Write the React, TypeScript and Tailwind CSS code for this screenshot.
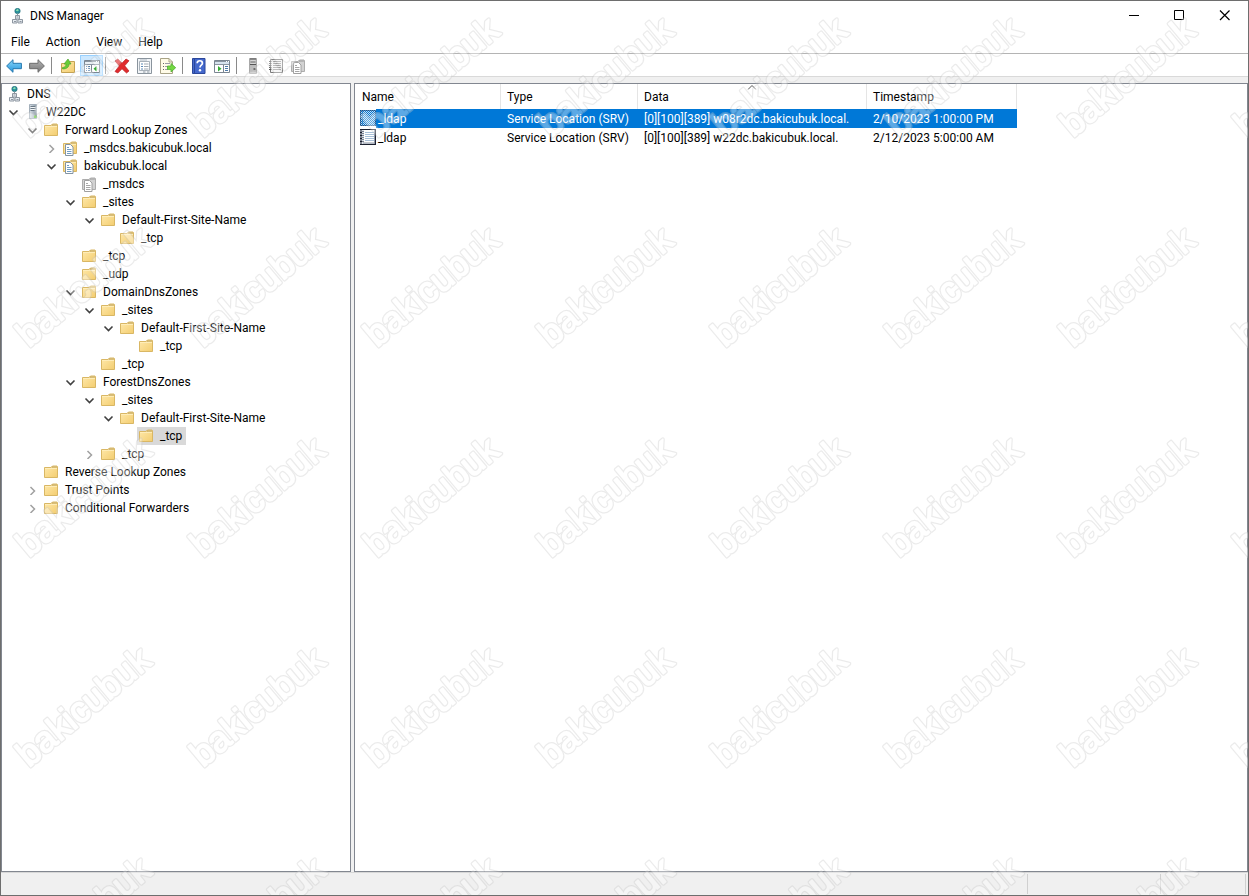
import type { ReactNode } from 'react';

type IconName =
	| 'dns'
	| 'server'
	| 'folder'
	| 'zone'
	| 'zoneGray'
	| 'back'
	| 'forward'
	| 'up'
	| 'treePane'
	| 'delete'
	| 'properties'
	| 'export'
	| 'help'
	| 'actionPane'
	| 'serverGray'
	| 'list'
	| 'record'
	| 'recordSelected';

type TreeNode = {
	label: string;
	icon: IconName;
	expanded?: boolean;
	selected?: boolean;
	children?: TreeNode[];
};

const Icon = ({ name }: { name: IconName }) => (
	<svg width="16" height="16" viewBox="0 0 16 16" className="block shrink-0" aria-hidden="true">
		{icons[name]}
	</svg>
);

const folderShape = (
	<>
		<path d="M.5 3.5h6.500l1.500-1.500h4.500l.5 1v10.500h-13z" fill="url(#folderFill)" stroke="#d9b764" />
		<path d="M8 2.500h4.500v1h-4.500z" fill="#fff8dc" stroke="#c9a95a" strokeWidth=".7" />
		<path d="M1 4.500h12" stroke="#fff0c0" strokeWidth=".8" />
	</>
);

const grayFolderShape = (
	<>
		<path d="M.5 3.5h6.500l1.500-1.500h4.500l.5 1v10.500h-13z" fill="#d2d2d2" stroke="#adadad" />
		<path d="M8 2.500h4.500v1h-4.500z" fill="#f5f5f5" stroke="#a0a0a0" strokeWidth=".7" />
	</>
);

const icons: Record<IconName, ReactNode> = {
	dns: (
		<>
			<circle cx="8.5" cy="3" r="2.7" fill="#2b929c" stroke="#1d6874" strokeWidth=".6" />
			<path d="M6.700 2.5 8.500 1l1.500 1.200-1.700 1z" fill="#8be0b0" />
			<path d="M8.500 5.500v1.500" stroke="#8c949d" />
			<path d="M6.500 7.500h4v3.500h-4zM3.500 11.500h4.500v3.500h-4.500zM9 11.500h4.500v3.500h-4.500z" fill="#e7ecf1" stroke="#8e97a1" />
			<path d="M7.500 9h2M5 13.500h2M10.500 13.500h2" stroke="#8e97a1" />
		</>
	),
	server: (
		<>
			<path d="M4.5.5h7v14h-7z" fill="url(#serverFill)" stroke="#a3afba" />
			<path d="M5.5 2.5h5M5.5 4.5h5M5.5 6.5h5" stroke="#6b7985" />
			<path d="M5.5 3.5h5M5.5 5.5h5" stroke="#f3f6f8" />
			<path d="M9 11.500h2.500v2.500H9z" fill="#62c43a" />
		</>
	),
	folder: folderShape,
	zone: (
		<>
			{folderShape}
			<path d="M2.500 4.500h5l2.500 2.500v8.500h-7.500z" fill="#fff" stroke="#8494a2" />
			<path d="M4 7.500h2M4 9.500h4.500M4 11.500h4.500M4 13.500h4.500" stroke="#6f9cc4" />
		</>
	),
	zoneGray: (
		<>
			{grayFolderShape}
			<path d="M2.500 4.500h5l2.500 2.500v8.500h-7.500z" fill="#fff" stroke="#a0a0a0" />
			<path d="M4 7.500h2M4 9.500h4.500M4 11.500h4.500M4 13.500h4.500" stroke="#a6a6a6" />
		</>
	),
	back: (
		<path d="M.6 8 7 1.7v3.600h8.400v5.400H7v3.600z" fill="url(#backFill)" stroke="#2678ae" strokeLinejoin="round" />
	),
	forward: (
		<path d="M15.4 8 9 1.7v3.600H.6v5.400H9v3.600z" fill="url(#forwardFill)" stroke="#6c6c6c" strokeLinejoin="round" />
	),
	up: (
		<>
			<path d="M1.500 5.500h7l1.500-2h4.500v11h-13z" fill="url(#folderFill)" stroke="#c4a354" />
			<path
				d="M2.500 9.500C5 9.500 6 8 6 6H4l4-5 3 5H9c0 3-2 5-6.500 5z"
				fill="#67cc36"
				stroke="#4fa52f"
				strokeWidth=".7"
			/>
		</>
	),
	treePane: (
		<>
			<path d="M.5 2.500h15v12H.5z" fill="#fff" stroke="#7a8591" />
			<path d="M1 3.500h14M1 6.500h14" stroke="#8a95a1" />
			<path d="M1 5h14" stroke="#e9eff4" strokeWidth="2" />
			<path d="M12 3.500h1M14 3.500h1" stroke="#fff" />
			<path d="M7.500 7v7.500" stroke="#7a8591" />
			<path d="M2 8.500h1M4 8.500h2M2 10.500h1M4 10.500h2M2 12.500h1M4 12.500h2" stroke="#4c79a8" />
			<path d="M12.500 8v5.500L9.500 10.700z" fill="#37ad35" />
		</>
	),
	delete: (
		<path
			d="m1 3 2.800-2L8 5.200 12 1l3 1.800L10.700 7.800 15 13l-2.500 2L8 10.800 3.800 15 1 13.500l4.300-5.600z"
			fill="#e02a2c"
			stroke="#b92125"
			strokeWidth=".7"
		/>
	),
	properties: (
		<>
			<path d="M.5.5h14v15H.5z" fill="#f1f4f7" stroke="#8a949d" />
			<path d="M2.500 3.500h10v9h-10z" fill="#fff" stroke="#a9b2ba" />
			<path d="M3 2h7" stroke="#b3bcc5" />
			<path d="M4 6h2M4 8.500h2M4 11h2" stroke="#5b88b5" />
			<path d="M7 6h4.500M7 8.500h4.500M7 11h4.500" stroke="#a0a9b2" />
			<path d="M6 14h2.500M10 14h2.500" stroke="#8c969f" />
		</>
	),
	export: (
		<>
			<path d="M.5.5h8.500l3.500 3.500v11.500H.5z" fill="#fffbe7" stroke="#a9a386" />
			<path d="M9 .5V4h3.500" fill="none" stroke="#a9a386" />
			<path d="M3 5.500h1M3 8.500h1M3 11.500h1" stroke="#666" />
			<path d="M5 5.500h5M5 8.500h3M5 11.500h3" stroke="#9a9aa6" />
			<path d="M7.500 8h3.500V5.500l4.700 4.200L11 14v-2.600H7.500z" fill="#74d842" stroke="#4fae30" strokeWidth=".8" />
		</>
	),
	help: (
		<>
			<path d="M1.500.5h12.500v15H1.500z" fill="#4468cc" stroke="#2b479a" />
			<path d="M3.500 1v14" stroke="#2b479a" />
			<path d="M6.200 5.200c0-3.300 5.200-3.300 5.200 0 0 2-2.400 2.100-2.400 4.300" fill="none" stroke="#fff" strokeWidth="1.700" />
			<circle cx="9" cy="12.300" r="1.200" fill="#fff" />
		</>
	),
	actionPane: (
		<>
			<path d="M.5 2.500h15v12H.5z" fill="#fff" stroke="#7a8591" />
			<path d="M1 3.500h14M1 6.500h14" stroke="#8a95a1" />
			<path d="M1 5h14" stroke="#d7e3ee" strokeWidth="2" />
			<path d="M12 3.500h1M14 3.500h1" stroke="#fff" />
			<path d="M9.500 7v7.500" stroke="#7a8591" />
			<path d="M11 8.500h3M11 10.500h3M11 12.500h3" stroke="#4c79a8" />
			<path d="M4 8v5.500l3.500-2.800z" fill="#37ad35" />
		</>
	),
	serverGray: (
		<>
			<path d="M4.500.5h7v15h-7z" fill="#bcbcbc" stroke="#a8a8a8" />
			<path d="M5 1h6M5 6.500h6" stroke="#555" />
			<path d="M5.500 3h5M5.500 5h5" stroke="#efefef" />
			<path d="M5.500 4h5" stroke="#666" />
			<path d="M8.500 10h2v2h-2z" fill="#6d6d6d" />
		</>
	),
	list: (
		<>
			<path d="M2.500 1.500h12v13H2.500z" fill="#f4f4f4" stroke="#7a7a7a" />
			<path d="M5 3.500h8M5 5.500h8M5 7.500h8M5 9.500h8M5 11.500h8" stroke="#979797" />
			<path d="M1 3.500h2.500M1 5.500h2.500M1 7.500h2.500M1 9.500h2.500M1 11.500h2.500" stroke="#5c5c5c" />
		</>
	),
	record: (
		<>
			<path d="M0 0h16v16H0z" fill="#dfe3ea" />
			<path d="M4 1h10v13H4z" fill="#fff" />
			<path d="M5 3.500h9M5 5.500h9M5 7.500h9M5 9.500h9M5 11.500h9" stroke="#a9c0d8" />
			<path d="M2 2.500h2M2 4.500h2M2 6.500h2M2 8.500h2M2 10.500h2M2 12.500h2" stroke="#7b8391" />
			<path d="M3 14h11" stroke="#8b93a0" />
			<path d="M1 0v16" stroke="#1c2130" strokeWidth="2" strokeDasharray="1 .5" />
			<path d="M0 .5h16M0 15.500h16M15.500 0v16" stroke="#1c2130" />
			<path d="M14.500 1v14" stroke="#8e97a8" />
		</>
	),
	recordSelected: (
		<>
			<path d="M0 0h16v16H0z" fill="#c9def0" />
			<path d="M0 0h16v16H0z" fill="url(#dither)" />
			<path d="M.5.5h15v15H.5z" fill="none" stroke="#0b2f5c" strokeDasharray="1 1" />
			<path d="M2 1v14" stroke="#175794" strokeDasharray="1 1" />
		</>
	),
};

const tree: TreeNode = {
	label: 'W22DC',
	icon: 'server',
	expanded: true,
	children: [
		{
			label: 'Forward Lookup Zones',
			icon: 'folder',
			expanded: true,
			children: [
				{ label: '_msdcs.bakicubuk.local', icon: 'zone', expanded: false },
				{
					label: 'bakicubuk.local',
					icon: 'zone',
					expanded: true,
					children: [
						{ label: '_msdcs', icon: 'zoneGray' },
						{
							label: '_sites',
							icon: 'folder',
							expanded: true,
							children: [
								{
									label: 'Default-First-Site-Name',
									icon: 'folder',
									expanded: true,
									children: [{ label: '_tcp', icon: 'folder' }],
								},
							],
						},
						{ label: '_tcp', icon: 'folder' },
						{ label: '_udp', icon: 'folder' },
						{
							label: 'DomainDnsZones',
							icon: 'folder',
							expanded: true,
							children: [
								{
									label: '_sites',
									icon: 'folder',
									expanded: true,
									children: [
										{
											label: 'Default-First-Site-Name',
											icon: 'folder',
											expanded: true,
											children: [{ label: '_tcp', icon: 'folder' }],
										},
									],
								},
								{ label: '_tcp', icon: 'folder' },
							],
						},
						{
							label: 'ForestDnsZones',
							icon: 'folder',
							expanded: true,
							children: [
								{
									label: '_sites',
									icon: 'folder',
									expanded: true,
									children: [
										{
											label: 'Default-First-Site-Name',
											icon: 'folder',
											expanded: true,
											children: [{ label: '_tcp', icon: 'folder', selected: true }],
										},
									],
								},
								{ label: '_tcp', icon: 'folder', expanded: false },
							],
						},
					],
				},
			],
		},
		{ label: 'Reverse Lookup Zones', icon: 'folder' },
		{ label: 'Trust Points', icon: 'folder', expanded: false },
		{ label: 'Conditional Forwarders', icon: 'folder', expanded: false },
	],
};

const toolbar: { title: string; icon: IconName; active?: boolean }[][] = [
	[
		{ title: 'Back', icon: 'back' },
		{ title: 'Forward', icon: 'forward' },
	],
	[
		{ title: 'Up One Level', icon: 'up' },
		{ title: 'Show/Hide Console Tree', icon: 'treePane', active: true },
	],
	[
		{ title: 'Delete', icon: 'delete' },
		{ title: 'Properties', icon: 'properties' },
		{ title: 'Export List', icon: 'export' },
	],
	[
		{ title: 'Help', icon: 'help' },
		{ title: 'Show/Hide Action Pane', icon: 'actionPane' },
	],
	[
		{ title: 'New Server', icon: 'serverGray' },
		{ title: 'New Record', icon: 'list' },
		{ title: 'New Zone', icon: 'zoneGray' },
	],
];

const records = [
	{
		name: '_ldap',
		type: 'Service Location (SRV)',
		data: '[0][100][389] w08r2dc.bakicubuk.local.',
		timestamp: '2/10/2023 1:00:00 PM',
		selected: true,
	},
	{
		name: '_ldap',
		type: 'Service Location (SRV)',
		data: '[0][100][389] w22dc.bakicubuk.local.',
		timestamp: '2/12/2023 5:00:00 AM',
		selected: false,
	},
];

// Gradients and patterns shared by all the icons
const IconDefs = () => (
	<svg width="0" height="0" className="absolute" aria-hidden="true">
		<defs>
			<linearGradient id="folderFill" x1="0" y1="0" x2="1" y2="1">
				<stop offset="0" stopColor="#ffe9ab" />
				<stop offset="1" stopColor="#f3cd70" />
			</linearGradient>
			<linearGradient id="serverFill" x1="0" y1="0" x2="1" y2="0">
				<stop offset="0" stopColor="#dbe3ea" />
				<stop offset="1" stopColor="#8998a6" />
			</linearGradient>
			<linearGradient id="backFill" x1="0" y1="0" x2="0" y2="1">
				<stop offset="0" stopColor="#8bd6fa" />
				<stop offset="1" stopColor="#2496dc" />
			</linearGradient>
			<linearGradient id="forwardFill" x1="0" y1="0" x2="0" y2="1">
				<stop offset="0" stopColor="#b5b5b5" />
				<stop offset="1" stopColor="#777777" />
			</linearGradient>
			<pattern id="dither" width="2" height="2" patternUnits="userSpaceOnUse">
				<path d="M0 0h1v1H0zM1 1h1v1H1z" fill="#0078d7" />
			</pattern>
		</defs>
	</svg>
);

const Watermark = () => (
	<svg className="pointer-events-none absolute inset-0 h-full w-full" aria-hidden="true">
		<defs>
			<pattern id="watermark" width="174" height="210" patternUnits="userSpaceOnUse">
				<g
					transform="translate(28 137) rotate(-40)"
					fontFamily="Liberation Sans, Arial, sans-serif"
					fontSize="36"
					strokeLinejoin="round"
					opacity=".36"
				>
					<text fill="#c8c8c8" stroke="#c8c8c8" strokeWidth="4">
						bakicubuk
					</text>
					<text fill="#fff" stroke="#fff" strokeWidth="1.500">
						bakicubuk
					</text>
				</g>
			</pattern>
		</defs>
		<rect width="100%" height="100%" fill="url(#watermark)" />
	</svg>
);

const Chevron = ({ expanded }: { expanded: boolean }) => (
	<button aria-label={expanded ? 'Collapse' : 'Expand'} className="flex h-full w-[15px] items-center justify-center">
		<svg width="11" height="10" viewBox="0 0 11 10" fill="none" aria-hidden="true">
			{expanded ? (
				<path d="m1.500 3.500 4 4 4-4" stroke="#404040" strokeWidth="1.600" />
			) : (
				<path d="m3.500 2 4 4-4 4" stroke="#a0a0a0" strokeWidth="1.500" />
			)}
		</svg>
	</button>
);

const TreeLabel = ({ node }: { node: TreeNode }) => (
	<button
		className={`flex h-full items-center gap-[5px] pr-1 pl-[2px] whitespace-nowrap ${node.selected ? 'bg-[#d9d9d9]' : ''}`}
	>
		<Icon name={node.icon} />
		<span>{node.label}</span>
	</button>
);

const TreeItem = ({ node }: { node: TreeNode }) => (
	<li>
		<div className="flex h-[18px]">
			<div className="w-[17px] shrink-0">
				{node.expanded !== undefined && <Chevron expanded={node.expanded} />}
			</div>
			<TreeLabel node={node} />
		</div>
		{node.children && (
			<ul className="pl-[19px]">
				{node.children.map((child, index) => (
					<TreeItem key={index} node={child} />
				))}
			</ul>
		)}
	</li>
);

const TitleBar = () => (
	<header className="flex h-[29px] items-center">
		<div className="flex flex-1 items-center gap-[5px] pl-2">
			<Icon name="dns" />
			<h1>DNS Manager</h1>
		</div>
		<button aria-label="Minimize" className="flex h-full w-[46px] items-center justify-center">
			<svg width="10" height="11" viewBox="0 0 10 11" aria-hidden="true">
				<path d="M0 5.500h10" stroke="#000" />
			</svg>
		</button>
		<button aria-label="Maximize" className="flex h-full w-[44px] items-center justify-center">
			<svg width="10" height="11" viewBox="0 0 10 11" aria-hidden="true">
				<path d="M.5.5h9v9h-9z" fill="none" stroke="#000" />
			</svg>
		</button>
		<button aria-label="Close" className="flex h-full w-[47px] items-center justify-center">
			<svg width="11" height="11" viewBox="0 0 11 11" aria-hidden="true">
				<path d="m1 .5 9.500 9.500M10.500.5l-9.500 9.500" stroke="#000" strokeWidth="1.200" />
			</svg>
		</button>
	</header>
);

const App = () => {
	return (
		<div className="relative flex min-h-screen flex-col overflow-hidden border border-[#6e6e6e] bg-white font-['Roboto','Segoe_UI',sans-serif] text-[12px] leading-[18px] text-black">
			<IconDefs />
			<TitleBar />

			<nav className="flex h-6 items-center gap-4 border-b border-[#b4b4b4] pl-[10px]">
				{['File', 'Action', 'View', 'Help'].map((item) => (
					<button key={item}>{item}</button>
				))}
			</nav>

			<div className="flex h-[23px] items-end border-b border-[#d9d9d9] pl-[2px]" role="toolbar">
				{toolbar.map((group, index) => (
					<div key={index} className="flex items-center">
						{index > 0 && <span className="mr-[5px] ml-[2px] h-[17px] w-px bg-[#8a8a8a]" />}
						{group.map((item) => (
							<button
								key={item.title}
								aria-label={item.title}
								className={`flex h-[21px] w-[23px] items-end pb-[2px] ${item.active ? 'bg-[#cce8ff] pl-1 inset-ring inset-ring-[#99d1ff]' : 'pl-[3px]'}`}
							>
								<Icon name={item.icon} />
							</button>
						))}
					</div>
				))}
			</div>

			<main className="flex flex-1 gap-[3px] bg-[#f0f0f0] pt-[6px]">
				<section className="w-[350px] shrink-0 border border-[#828790] bg-white pt-px pl-[2px]">
					<ul>
						<li>
							<div className="flex h-[18px]">
								<TreeLabel node={{ label: 'DNS', icon: 'dns' }} />
							</div>
							<ul className="pl-[2px]">
								<TreeItem node={tree} />
							</ul>
						</li>
					</ul>
				</section>

				<section className="min-w-0 flex-1 border border-[#828790] bg-white">
					<table className="w-[662px] table-fixed border-separate border-spacing-0 text-left">
						<colgroup>
							<col className="w-[146px]" />
							<col className="w-[137px]" />
							<col className="w-[229px]" />
							<col className="w-[150px]" />
						</colgroup>
						<thead>
							<tr className="h-[25px]">
								{['Name', 'Type', 'Data', 'Timestamp'].map((column) => (
									<th
										key={column}
										className="relative border-r border-[#e5e5e5] p-0 pl-[6px] font-normal first:pl-[7px]"
									>
										{column}
										{column === 'Data' && (
											<svg
												width="9"
												height="5"
												viewBox="0 0 9 5"
												className="absolute top-px left-1/2 -translate-x-1/2"
												aria-hidden="true"
											>
												<path d="m.5 4.500 4-4 4 4" fill="none" stroke="#555" />
											</svg>
										)}
									</th>
								))}
							</tr>
						</thead>
						<tbody>
							{records.map((record) => {
								const cell = record.selected ? 'bg-[#0078d7] text-white' : '';
								return (
									<tr key={record.timestamp} className="h-[19px] whitespace-nowrap">
										<td className="p-0">
											<div className="flex h-[19px] pl-[5px]">
												<span className="pt-px">
													<Icon name={record.selected ? 'recordSelected' : 'record'} />
												</span>
												<span className={`flex-1 pt-px pl-[2px] ${cell}`}>{record.name}</span>
											</div>
										</td>
										<td className={`p-0 pt-px pl-[6px] ${cell}`}>{record.type}</td>
										<td className={`p-0 pt-px pl-[6px] ${cell}`}>{record.data}</td>
										<td className={`p-0 pt-px pl-[6px] ${cell}`}>{record.timestamp}</td>
									</tr>
								);
							})}
						</tbody>
					</table>
				</section>
			</main>

			<footer className="flex h-[23px] border-t border-[#d7d7d7] bg-[#f0f0f0] py-px pr-[2px]">
				<div className="flex-1 border-r border-[#d0d0d0]" />
				<div className="w-[133px] border-r border-[#d0d0d0]" />
				<div className="w-[85px] border-r border-[#d0d0d0]" />
			</footer>

			<Watermark />
		</div>
	);
};

export default App;
